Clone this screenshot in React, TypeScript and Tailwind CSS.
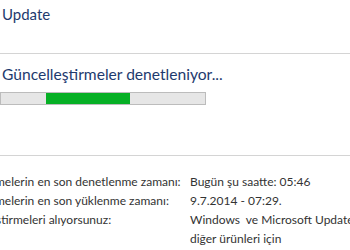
export default function App() {
  return (
    <div
      className="w-[350px] h-[250px] overflow-hidden bg-white"
      style={{ fontFamily: 'Lato, "Open Sans", sans-serif' }}
    >
      <div className="h-[54px] border-b border-[#d4d4d4] pl-[2px] pt-[4px]">
        <div className="text-[15px] leading-[20px] text-[#1e3a6e]">Update</div>
      </div>
      <div className="pl-[2px] pt-[10px] text-[15.6px] leading-[20px] text-[#1e3a6e] whitespace-nowrap">
        Güncelleştirmeler denetleniyor...
      </div>
      <div className="mt-[8px] h-[13px] w-[206px] border border-[#bcbcbc] bg-[#e6e6e6] flex">
        <div className="ml-[45px] w-[84px] h-full bg-[#06b025]" />
      </div>
      <div className="mt-[50px] border-t border-[#d4d4d4]" />
      <div className="pt-[16px] grid grid-cols-[190px_1fr] text-[12px] leading-[19px] text-[#333333] whitespace-nowrap overflow-hidden">
        <div className="overflow-hidden">
          <span className="block -ml-[5px]">melerin en son denetlenme zamanı:</span>
        </div>
        <div>Bugün şu saatte: 05:46</div>
        <div className="overflow-hidden">
          <span className="block -ml-[5px]">melerin en son yüklenme zamanı:</span>
        </div>
        <div>9.7.2014 - 07:29.</div>
        <div className="overflow-hidden">
          <span className="block -ml-[4px]">ştirmeleri alıyorsunuz:</span>
        </div>
        <div>
          <div>Windows&nbsp; ve Microsoft Update</div>
          <div>diğer ürünleri için</div>
        </div>
      </div>
    </div>
  );
}
